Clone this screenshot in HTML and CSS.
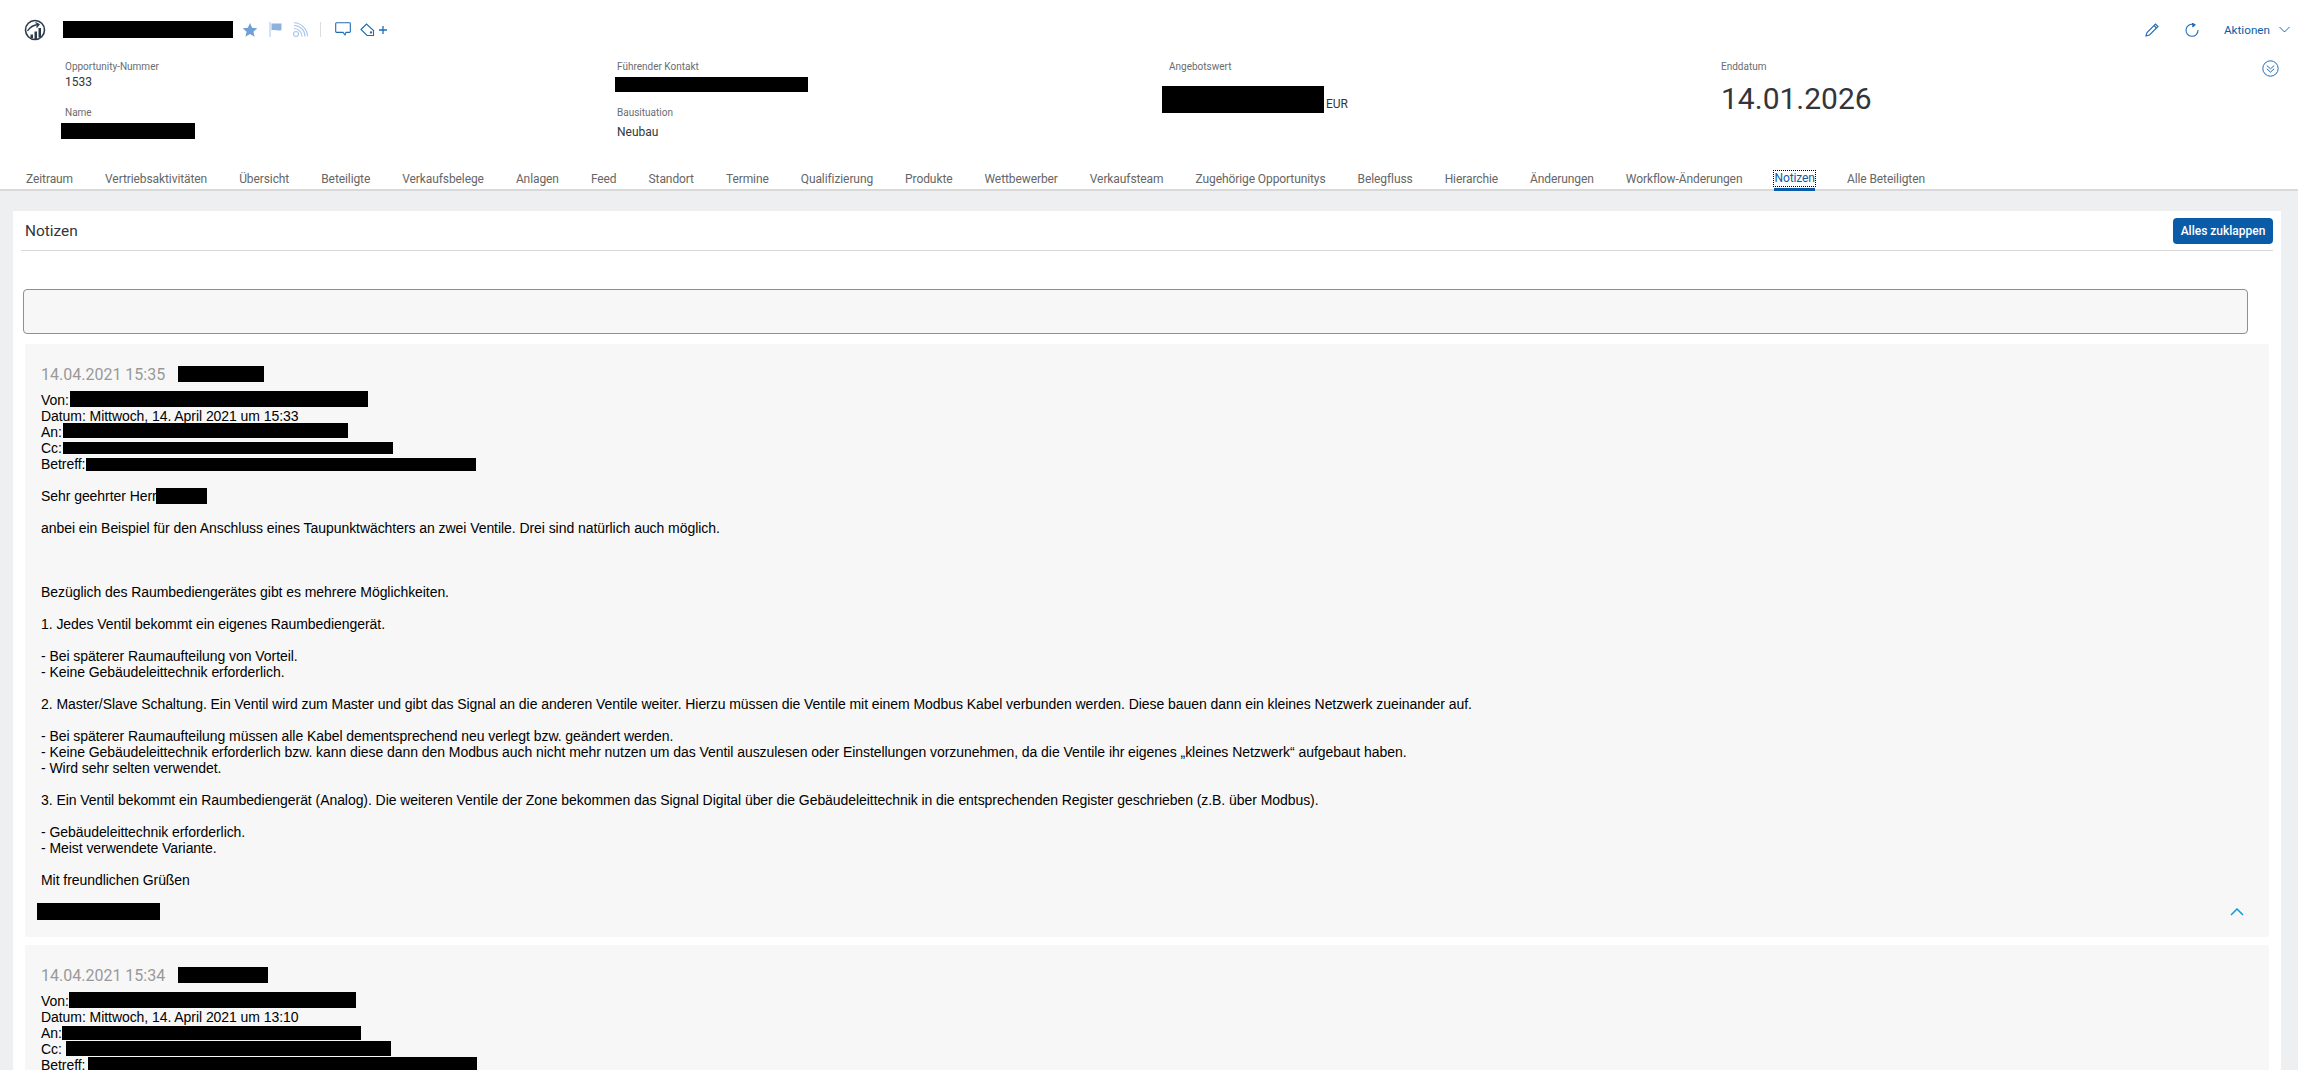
FILE: index.html
```html
<!DOCTYPE html>
<html lang="de">
<head>
    <meta charset="utf-8">
    <title>Notizen</title>
    <link rel="stylesheet" href="styles.css">
</head>
<body>
    <header class="top">
        <div class="title-row">
            <svg class="logo" width="22" height="22" viewBox="0 0 22 22">
                <circle cx="11" cy="11" r="9.500" fill="none" stroke="#2b3a4a" stroke-width="1.600"/>
                <path d="M3.500 12 C6 8 9.500 6 14 5.500 M11.500 3.500 L15 5.500 L12.500 8.500" fill="none" stroke="#2b3a4a" stroke-width="1.300"/>
                <path d="M6.500 15.500h2.500v3.500H6.500z M10.500 12.500h2.500v7.500h-2.500z M14.500 9h2.500v9.500h-2.500z" fill="#2b3a4a"/>
            </svg>
            <div class="redact title-redact"></div>
            <div class="title-icons">
                <svg width="16" height="16" viewBox="0 0 16 16"><path d="M8 1l2.100 4.800 5.200.5-3.900 3.400 1.200 5.100L8 12.100 3.400 14.800l1.200-5.100L.7 6.300l5.200-.5z" fill="#6f9fd6"/></svg>
                <svg class="flag" width="14" height="16" viewBox="0 0 14 16"><path d="M1 0v15" stroke="#a9c5e6" stroke-width="1"/><path d="M2.500 1.500h10v6.500c-3 1.500-7-1-10 .5z" fill="#8db2de"/></svg>
                <svg width="16" height="16" viewBox="0 0 16 16" fill="none" stroke="#a9c5e6" stroke-width="1.100"><circle cx="4" cy="12" r="2.500"/><path d="M2 6.500a8 8 0 0 1 8 8M2 3.500a11 11 0 0 1 11 11M2 .8a14 14 0 0 1 13.500 13.500"/></svg>
                <span class="sep"></span>
                <svg width="16" height="15" viewBox="0 0 16 15" fill="none" stroke="#1f6cb5" stroke-width="1.100"><path d="M1.500.8h13a.8.8 0 0 1 .8.8v8a.8.8 0 0 1-.8.8H11l-1 2.600-2-2.600H1.500a.8.800 0 0 1-.8-.8v-8a.8.800 0 0 1 .8-.8z"/></svg>
                <span class="tag-add">
                    <svg width="15" height="15" viewBox="0 0 15 15" fill="none" stroke="#1f6cb5" stroke-width="1.100"><path d="M1 7.500L6.500 2l7 6.500V13.500H7z"/><circle cx="11" cy="10.500" r=".6"/></svg>
                    <svg width="8" height="8" viewBox="0 0 8 8"><path d="M4 0v8M0 4h8" stroke="#1f6cb5" stroke-width="1.300"/></svg>
                </span>
            </div>
            <div class="actions">
                <svg width="14" height="14" viewBox="0 0 14 14" fill="none" stroke="#1f6cb5" stroke-width="1.100"><path d="M1 13l1-3.500L10.500 1l2.500 2.500L4.500 12z"/><path d="M9 2.500L11.500 5"/></svg>
                <svg width="14" height="14" viewBox="0 0 14 14" fill="none" stroke="#1f6cb5" stroke-width="1.100"><path d="M8.500 1.500a6 6 0 1 0 4.500 5.500"/><path d="M7 0l3 1.800L7.500 4" fill="#1f6cb5"/></svg>
                <span class="action-text">Aktionen</span>
                <svg width="11" height="7" viewBox="0 0 11 7" fill="none" stroke="#1f6cb5" stroke-width="1"><path d="M.5 1l5 5 5-5"/></svg>
            </div>
        </div>
        <div class="facets">
            <div class="facet">
                <div class="label">Opportunity-Nummer</div>
                <div class="value">1533</div>
                <div class="label label-second">Name</div>
                <div class="redact redact-name"></div>
            </div>
            <div class="facet">
                <div class="label">Führender Kontakt</div>
                <div class="redact redact-contact"></div>
                <div class="label label-situation">Bausituation</div>
                <div class="value value-neubau">Neubau</div>
            </div>
            <div class="facet">
                <div class="label">Angebotswert</div>
                <div class="amount"><div class="redact redact-amount"></div><span class="currency">EUR</span></div>
            </div>
            <div class="facet">
                <div class="label">Enddatum</div>
                <div class="big-date">14.01.2026</div>
            </div>
            <svg class="collapse" width="17" height="17" viewBox="0 0 17 17" fill="none" stroke="#1f6cb5" stroke-width="1"><circle cx="8.500" cy="8.500" r="7.700"/><path d="M4.800 5.500l3.700 3.300 3.700-3.300M4.800 8.800l3.700 3.300 3.700-3.300"/></svg>
        </div>
        <nav class="tabs">
            <a>Zeitraum</a>
            <a>Vertriebsaktivitäten</a>
            <a>Übersicht</a>
            <a>Beteiligte</a>
            <a>Verkaufsbelege</a>
            <a>Anlagen</a>
            <a>Feed</a>
            <a>Standort</a>
            <a>Termine</a>
            <a>Qualifizierung</a>
            <a>Produkte</a>
            <a>Wettbewerber</a>
            <a>Verkaufsteam</a>
            <a>Zugehörige Opportunitys</a>
            <a>Belegfluss</a>
            <a>Hierarchie</a>
            <a>Änderungen</a>
            <a>Workflow-Änderungen</a>
            <a class="active"><span>Notizen</span></a>
            <a>Alle Beteiligten</a>
        </nav>
    </header>

    <main class="content">
        <section class="card">
            <div class="card-head">
                <h2>Notizen</h2>
                <button class="btn">Alles zuklappen</button>
            </div>
            <div class="note-input"></div>

            <article class="note note-first">
                <div class="note-head"><span class="note-date">14.04.2021 15:35</span><span class="redact r-author1"></span></div>
                <div class="mail">
                    <div>Von:<span class="redact r-von1"></span></div>
                    <div>Datum: Mittwoch, 14. April 2021 um 15:33</div>
                    <div>An:<span class="redact r-an1"></span></div>
                    <div>Cc:<span class="redact r-cc1"></span></div>
                    <div>Betreff:<span class="redact r-betreff1"></span></div>
                    <br>
                    <div>Sehr geehrter Herr<span class="redact r-herr"></span></div>
                    <br>
                    <div>anbei ein Beispiel für den Anschluss eines Taupunktwächters an zwei Ventile. Drei sind natürlich auch möglich.</div>
                    <br><br><br>
                    <div>Bezüglich des Raumbediengerätes gibt es mehrere Möglichkeiten.</div>
                    <br>
                    <div>1. Jedes Ventil bekommt ein eigenes Raumbediengerät.</div>
                    <br>
                    <div>- Bei späterer Raumaufteilung von Vorteil.</div>
                    <div>- Keine Gebäudeleittechnik erforderlich.</div>
                    <br>
                    <div>2. Master/Slave Schaltung. Ein Ventil wird zum Master und gibt das Signal an die anderen Ventile weiter. Hierzu müssen die Ventile mit einem Modbus Kabel verbunden werden. Diese bauen dann ein kleines Netzwerk zueinander auf.</div>
                    <br>
                    <div>- Bei späterer Raumaufteilung müssen alle Kabel dementsprechend neu verlegt bzw. geändert werden.</div>
                    <div>- Keine Gebäudeleittechnik erforderlich bzw. kann diese dann den Modbus auch nicht mehr nutzen um das Ventil auszulesen oder Einstellungen vorzunehmen, da die Ventile ihr eigenes „kleines Netzwerk“ aufgebaut haben.</div>
                    <div>- Wird sehr selten verwendet.</div>
                    <br>
                    <div>3. Ein Ventil bekommt ein Raumbediengerät (Analog). Die weiteren Ventile der Zone bekommen das Signal Digital über die Gebäudeleittechnik in die entsprechenden Register geschrieben (z.B. über Modbus).</div>
                    <br>
                    <div>- Gebäudeleittechnik erforderlich.</div>
                    <div>- Meist verwendete Variante.</div>
                    <br>
                    <div>Mit freundlichen Grüßen</div>
                </div>
                <div class="note-foot">
                    <div class="redact r-sign"></div>
                    <svg width="14" height="8" viewBox="0 0 14 8" fill="none" stroke="#0a9bdb" stroke-width="1.500"><path d="M1 7l6-6 6 6"/></svg>
                </div>
            </article>

            <article class="note">
                <div class="note-head"><span class="note-date">14.04.2021 15:34</span><span class="redact r-author2"></span></div>
                <div class="mail">
                    <div>Von:<span class="redact r-von2"></span></div>
                    <div>Datum: Mittwoch, 14. April 2021 um 13:10</div>
                    <div>An:<span class="redact r-an2"></span></div>
                    <div>Cc:<span class="redact r-cc2"></span></div>
                    <div>Betreff:<span class="redact r-betreff2"></span></div>
                </div>
            </article>
        </section>
    </main>
</body>
</html>
```

FILE: styles.css
```css
* {
    margin: 0;
    padding: 0;
    box-sizing: border-box;
}
html, body {
    height: 100%;
    overflow: hidden;
}
body {
    font-family: Roboto, "Noto Sans", sans-serif;
    background: #edeff0;
    color: #32363a;
    display: flex;
    flex-direction: column;
}
.redact {
    background: #000;
}
.top {
    background: #fff;
    height: 191px;
    border-bottom: 2px solid #d9d9d9;
    flex-shrink: 0;
}
.title-row {
    display: flex;
    align-items: center;
    height: 59px;
    padding: 0 8px 0 24px;
}
.logo {
    margin-right: 17px;
}
.title-redact {
    width: 170px;
    height: 17px;
    margin-top: -1px;
}
.title-icons {
    display: flex;
    align-items: center;
    gap: 9px;
    margin-left: 9px;
}
.flag {
    margin-left: 2px;
}
.sep {
    width: 1px;
    height: 15px;
    background: #dcdcdc;
    margin: 0 5px 0 3px;
}
.tag-add {
    display: flex;
    align-items: center;
    gap: 4px;
}
.actions {
    margin-left: auto;
    display: flex;
    align-items: center;
}
.actions svg:nth-child(2) {
    margin: 0 25px 0 26px;
}
.action-text {
    font-size: 11.700px;
    color: #0a5ca8;
    margin-right: 9px;
}
.facets {
    display: grid;
    grid-template-columns: repeat(4, 552px);
    padding-left: 65px;
    height: 104px;
    position: relative;
}
.collapse {
    position: absolute;
    right: 19px;
    top: 1px;
}
.label {
    font-size: 10px;
    line-height: 14px;
    color: #6a6d70;
    margin-top: 1px;
}
.value {
    font-size: 12px;
    line-height: 14px;
    margin-top: 1px;
}
.label-second {
    margin-top: 17px;
}
.redact-name {
    width: 134px;
    height: 16px;
    margin: 3px 0 0 -4px;
}
.redact-contact {
    width: 193px;
    height: 15px;
    margin: 3px 0 0 -2px;
}
.label-situation {
    margin-top: 14px;
}
.value-neubau {
    margin-top: 5px;
}
.amount {
    display: flex;
    align-items: flex-end;
    margin: 12px 0 0 -7px;
}
.redact-amount {
    width: 162px;
    height: 27px;
}
.currency {
    font-size: 12px;
    line-height: 14px;
    margin: 0 0 2px 2px;
}
.big-date {
    font-size: 30px;
    line-height: 36px;
    margin-top: 7px;
}
.tabs {
    display: flex;
    gap: 32px;
    padding: 3px 0 0 26px;
    font-size: 12px;
    letter-spacing: -0.09px;
    line-height: 26px;
    color: #666;
}
.tabs .active {
    color: #0a5ca8;
    height: 25px;
    border-bottom: 3px solid #0a5ca8;
}
.tabs .active span {
    outline: 1px dotted #000;
    display: block;
    line-height: 15px;
    margin-top: 5px;
}
.content {
    flex: 1;
    padding: 20px 17px 0 13px;
    min-height: 0;
}
.card {
    background: #fff;
    height: 100%;
    padding: 0 8px;
    overflow: hidden;
}
.card-head {
    display: flex;
    justify-content: space-between;
    align-items: center;
    height: 40px;
    border-bottom: 1px solid #d9d9d9;
    padding: 0 0 0 4px;
}
.card-head h2 {
    font-size: 15.400px;
    font-weight: 400;
}
.btn {
    width: 100px;
    height: 26px;
    background: #0a5ca8;
    color: #fff;
    border: none;
    border-radius: 4px;
    font-family: inherit;
    font-size: 12px;
    font-weight: 500;
}
.note-input {
    height: 45px;
    width: 2225px;
    margin: 38px 0 0 2px;
    background: #f7f7f7;
    border: 1px solid #89919a;
    border-radius: 4px;
}
.note {
    background: #f7f7f7;
    border-radius: 2px;
    width: 2244px;
    margin: 8px 0 0 4px;
    padding: 20px 16px 0 16px;
}
.note-first {
    margin-top: 10px;
    height: 593px;
}
.note-head {
    display: flex;
    align-items: center;
    height: 20px;
}
.note-date {
    font-size: 16px;
    color: #999;
}
.note-head .redact {
    height: 16px;
    margin-left: 13px;
}
.r-author1 { width: 86px; }
.r-author2 { width: 90px; }
.mail {
    font-family: "Liberation Sans", Arial, sans-serif;
    font-size: 14px;
    letter-spacing: -0.06px;
    line-height: 16px;
    color: #000;
    margin-top: 8px;
}
.mail .redact {
    display: inline-block;
    height: 16px;
    vertical-align: top;
}
.mail .r-von1 { width: 298px; margin: -1px 0 0 1px; }
.mail .r-an1 { width: 285px; height: 15px; margin: -1px 0 0 1px; }
.mail .r-cc1 { width: 330px; height: 12px; margin: 2px 0 0 1px; }
.mail .r-betreff1 { width: 390px; height: 13px; margin: 2px 0 0 1px; }
.mail .r-herr { width: 51px; margin-left: -1px; }
.mail .r-von2 { width: 287px; margin-top: -1px; }
.mail .r-an2 { width: 299px; height: 14px; margin-top: 1px; }
.mail .r-cc2 { width: 325px; height: 15px; margin-left: 4px; }
.mail .r-betreff2 { width: 389px; margin-left: 3px; }
.note-foot {
    display: flex;
    justify-content: space-between;
    align-items: center;
    margin: 15px 9px 0 -4px;
}
.r-sign {
    width: 123px;
    height: 17px;
}
```
